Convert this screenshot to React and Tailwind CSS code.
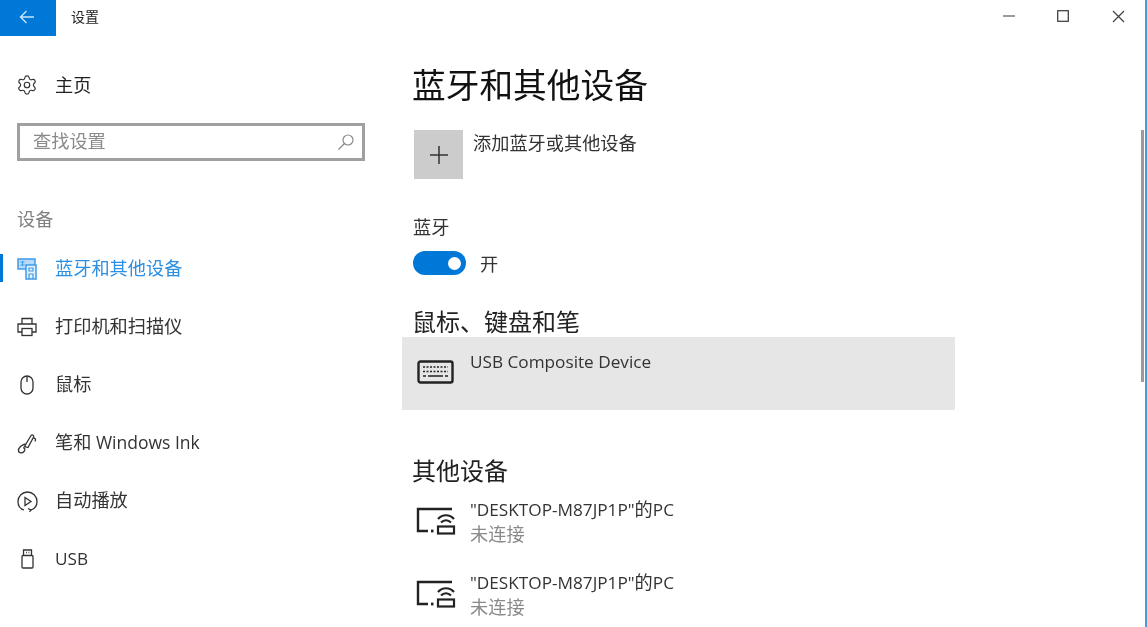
import React from "react";
import { Settings } from "lucide-react";

const FONT = "font-['Open_Sans','Noto_Sans_CJK_SC',sans-serif]";

const DevicesIcon = () => (
  <svg width="20" height="22" viewBox="0 0 20 22" fill="none" stroke="#3f9ae8" strokeWidth="1.500">
    <rect x="1" y="1" width="17" height="10" fill="#b9daf6" />
    <path d="M3.500 4h4M3.500 7h4M5.500 3v5" strokeWidth="1" />
    <rect x="9" y="7" width="10" height="14" fill="#e4f1fc" />
    <path d="M12 10h4v3h-4zM12 21v-5h4v5" strokeWidth="1.200" />
  </svg>
);

const PrinterIcon = () => (
  <svg width="20" height="20" viewBox="0 0 20 20" fill="none" stroke="#333" strokeWidth="1.300">
    <path d="M5 7V1.500h10V7" />
    <path d="M5 15H1V7h18v8h-4" />
    <rect x="5" y="11.500" width="10" height="7" />
  </svg>
);

const MouseIcon = () => (
  <svg width="14" height="20" viewBox="0 0 14 20" fill="none" stroke="#333" strokeWidth="1.300">
    <rect x="1" y="1" width="12" height="18" rx="6" />
    <path d="M7 1v6" />
  </svg>
);

const PenIcon = () => (
  <svg width="21" height="21" viewBox="0 0 21 21" fill="none" stroke="#333" strokeWidth="1.300">
    <path d="M7.500 13.500L14 2.500c.8-1.200 3.200-.3 2.700 1.200L11 14.500z" />
    <path d="M16.500 5c2 .3 2.500 1.500 1.500 3.500" />
    <path d="M8.500 11C5 11.500 1 15 1.500 18c.5 2.500 4 2.500 5.500.5s1-4-1-3.500" />
  </svg>
);

const AutoplayIcon = () => (
  <svg width="21" height="21" viewBox="0 0 21 21" fill="none" stroke="#333" strokeWidth="1.300">
    <path d="M7 19C3.500 18 1 14.800 1 10.500 1 5.300 5.300 1 10.500 1S20 5.300 20 10.500c0 4-2.500 7.300-6 8.500" />
    <path d="M8 6.500l6 4-6 4z" />
    <path d="M11 17.500l3 1.500-1.500 1.800" />
  </svg>
);

const UsbIcon = () => (
  <svg width="13" height="20" viewBox="0 0 13 20" fill="none" stroke="#333" strokeWidth="1.300">
    <rect x="1" y="6.500" width="11" height="12.500" rx="1" />
    <path d="M2.500 6.500V1h8v5.500" />
    <path d="M5 3.500h.8M7.500 3.500h.8" />
  </svg>
);

const KeyboardIcon = () => (
  <svg width="37" height="24" viewBox="0 0 37 24" fill="none" stroke="#222" strokeWidth="2.400">
    <rect x="1.500" y="1.500" width="34" height="21" rx="2" />
    <path d="M6 7h25M6 11.500h25" strokeDasharray="2 1.500" strokeWidth="1.600" />
    <path d="M6 16h3M11 16h15M28 16h3" strokeWidth="1.600" />
  </svg>
);

const RemotePcIcon = () => (
  <svg width="40" height="30" viewBox="0 0 40 30" fill="none" stroke="#222" strokeWidth="2.400">
    <path d="M36 3H2v22h10" />
    <path d="M15 25h2.500" strokeWidth="2.800" />
    <path d="M22 13c4.500-5 11.500-5 16 0M25 16.500c3-3 7-3 10 0" strokeWidth="2.200" />
    <rect x="22" y="20.500" width="16" height="7" strokeWidth="2.200" />
  </svg>
);

const navItems = [
  { label: "蓝牙和其他设备", icon: <DevicesIcon />, active: true },
  { label: "打印机和扫描仪", icon: <PrinterIcon /> },
  { label: "鼠标", icon: <MouseIcon /> },
  { label: <>笔和<span className="text-[17.500px]"> Windows Ink</span></>, icon: <PenIcon /> },
  { label: "自动播放", icon: <AutoplayIcon /> },
  { label: <span className="text-[17.200px]">USB</span>, icon: <UsbIcon /> },
];

const Sidebar = () => (
  <div className="w-[402px] shrink-0 pt-[36px]">
    {/* HOME */}
    <div className="flex h-[26px] items-center pl-[16px] text-[18.200px] leading-[26px] text-[#222]">
      <span className="flex w-[39px] shrink-0"><Settings size={22} strokeWidth={1.300} color="#333" /></span>
      <span>主页</span>
    </div>

    {/* SEARCH */}
    <div className="ml-[17px] mt-[25px] flex h-[38px] w-[348px] items-center justify-between border-[3px] border-[#a0a0a0] pl-[13px] pr-[7px]">
      <span className="text-[18.200px] text-[#8a8a8a]">查找设置</span>
      <svg width="18" height="18" viewBox="0 0 18 18" fill="none" stroke="#8a8a8a" strokeWidth="1.200">
        <circle cx="11" cy="7" r="5" />
        <path d="M7.500 10.500L1.500 16.500" />
      </svg>
    </div>

    <div className="ml-[17px] mt-[45px] h-[26px] text-[18.200px] leading-[26px] text-[#808080]">设备</div>

    {/* NAV */}
    <div className="mt-[8px]">
      {navItems.map((item, i) => (
        <div key={i} className="relative flex h-[58px] items-center text-[18.200px]">
          {item.active && <div className="absolute left-0 top-[14px] h-[28px] w-[3px] bg-[#0078d7]" />}
          <span className="flex w-[55px] shrink-0 justify-center pr-[1px]">{item.icon}</span>
          <span className={item.active ? "text-[#2b8fe3]" : "text-[#333]"}>{item.label}</span>
        </div>
      ))}
    </div>
  </div>
);

const DeviceRow = ({ name }) => (
  <div className="flex h-[73px] items-start pl-[14px]">
    <span className="mt-[9px] w-[54px] shrink-0"><RemotePcIcon /></span>
    <div className="text-[18.200px] leading-[24px]">
      <div className="text-[#333]"><span className="text-[17.200px]">{name}</span>的<span className="text-[17.200px]">PC</span></div>
      <div className="text-[#8a8a8a]">未连接</div>
    </div>
  </div>
);

const Content = () => (
  <div className="flex-1 pt-[25px]">
    <div className="pl-[10px] text-[33.700px] leading-[48px] text-[#111]">蓝牙和其他设备</div>

    <div className="mt-[21px] flex pl-[12px]">
      <div className="flex h-[49px] w-[49px] items-center justify-center bg-[#cccccc]">
        <svg width="20" height="20" viewBox="0 0 20 20" stroke="#333" strokeWidth="1.500">
          <path d="M10 1v18M1 10h18" />
        </svg>
      </div>
      <div className="ml-[10px] text-[18.200px] leading-[26px] text-[#333]">添加蓝牙或其他设备</div>
    </div>

    <div className="mt-[35px] pl-[11px] text-[18.200px] leading-[26px] text-[#333]">蓝牙</div>

    <div className="mt-[11px] flex items-start pl-[11px]">
      <div className="flex h-[24px] w-[53px] items-center justify-end rounded-full bg-[#0078d7] pr-[5px]">
        <div className="h-[13px] w-[13px] rounded-full bg-white" />
      </div>
      <span className="ml-[14px] mt-[1px] text-[18.200px] leading-[24px] text-[#333]">开</span>
    </div>

    <div className="mt-[30px] pl-[10px] text-[24px] leading-[31px] text-[#222]">鼠标、键盘和笔</div>

    <div className="flex h-[73px] w-[553px] items-start bg-[#e6e6e6] pl-[15px]">
      <span className="mt-[23px] w-[53px] shrink-0"><KeyboardIcon /></span>
      <span className="mt-[13px] text-[17.200px] leading-[24px] text-[#333]">USB Composite Device</span>
    </div>

    <div className="mt-[45px] pl-[10px] text-[24px] leading-[32px] text-[#222]">其他设备</div>
    <div className="mt-[10px]">
      <DeviceRow name={'"DESKTOP-M87JP1P"'} />
      <DeviceRow name={'"DESKTOP-M87JP1P"'} />
    </div>
  </div>
);

const App = () => {
  return (
    <div className={`${FONT} relative h-[627px] w-[1147px] overflow-hidden border-r-2 border-[#4a9ae0] bg-white blur-[0.5px]`}>
      {/* TITLE BAR */}
      <div className="flex h-[36px] items-center">
        <div className="flex h-[36px] w-[56px] items-center justify-center bg-[#0078d7] pb-[3px] pr-[3px]">
          <svg width="16" height="14" viewBox="0 0 16 14" fill="none" stroke="#cfe6fa" strokeWidth="1.300">
            <path d="M15 7H1.500M7.500 1L1.500 7l6 6" />
          </svg>
        </div>
        <span className="mb-[4px] ml-[15px] text-[14px] text-[#222]">设置</span>
        <div className="mb-[4px] ml-auto flex items-center pr-[20px]">
          <svg width="12" height="2" viewBox="0 0 12 2" className="mr-[42px]"><path d="M0 1h12" stroke="#666" strokeWidth="1.300" /></svg>
          <svg width="12" height="12" viewBox="0 0 12 12" className="mr-[43px]" fill="none"><rect x=".7" y=".7" width="10.600" height="10.600" stroke="#444" strokeWidth="1.300" /></svg>
          <svg width="13" height="13" viewBox="0 0 13 13"><path d="M1 1l11 11M12 1L1 12" stroke="#444" strokeWidth="1.300" /></svg>
        </div>
      </div>

      {/* BODY */}
      <div className="flex">
        <Sidebar />
        <Content />
      </div>

      {/* SCROLLBAR */}
      <div className="absolute right-[1px] top-[130px] h-[252px] w-[3px] bg-[#9a9a9a]" />
    </div>
  );
};

export default App;
